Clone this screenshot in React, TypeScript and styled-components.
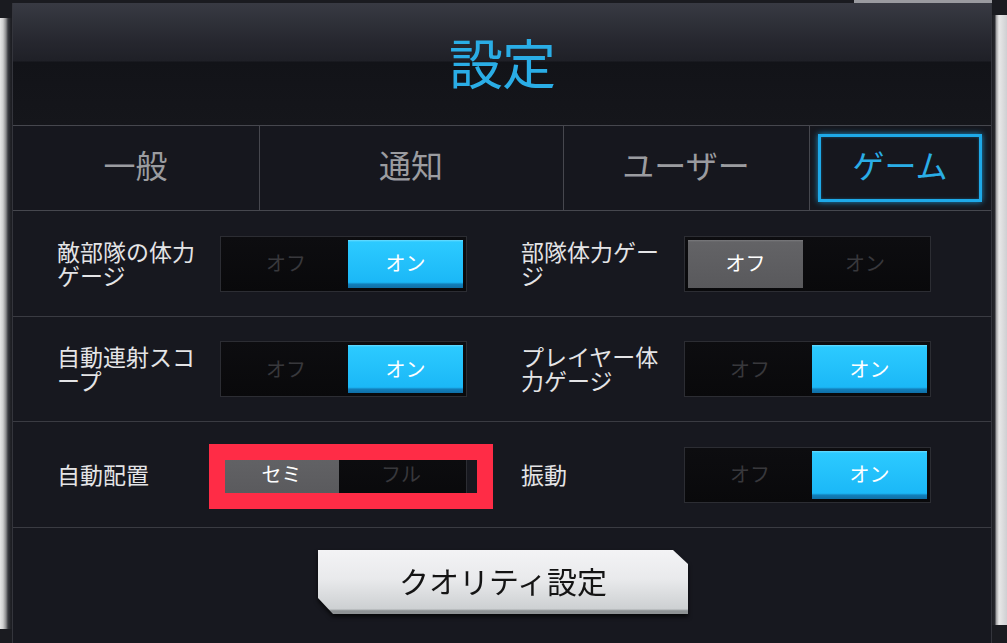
import React from "react";
import styled, { createGlobalStyle } from "styled-components";

const Global = createGlobalStyle`
  html, body { margin: 0; padding: 0; background: #16171c; }
  body { font-family: "Noto Sans CJK JP", "Noto Sans", sans-serif; }
  * { box-sizing: border-box; }
`;

const Frame = styled.div`
  width: 1007px;
  height: 643px;
  display: flex;
  overflow: hidden;
  background:
    linear-gradient(to right, transparent 854px, #9a9ba0 854px, #9a9ba0 992px, transparent 992px) top left / 100% 3px no-repeat,
    #1a1b20;
`;

const LeftBevel = styled.div`
  width: 12px;
  flex-shrink: 0;
  margin: 18px 0 14px;
  background: linear-gradient(to right, #e6e6e6 0, #cfcfcf 3px, #8a8a8c 6px, #3a3b40 8px, #1d1e23 11px);
`;

const RightBevel = styled.div`
  width: 15px;
  flex-shrink: 0;
  margin: 15px 0 18px;
  background: linear-gradient(to right, #1d1e23 0, #2a2b30 3px, #9c9c9e 4px, #e8e8e8 7px, #cfcfd2 15px);
`;

const Panel = styled.div`
  width: 980px;
  flex-shrink: 0;
  margin-top: 3px;
  display: flex;
  flex-direction: column;
  background: #17181f;
  border-left: 1px solid #34353c;
  border-right: 1px solid #34353c;
`;

const Header = styled.div`
  height: 123px;
  flex-shrink: 0;
  display: flex;
  align-items: center;
  justify-content: center;
  padding-bottom: 5px;
  border-bottom: 1px solid #46474e;
  background: linear-gradient(to bottom, #383a43 0, #272830 36px, #1f2027 58px, #121318 59px, #15161b 100%);
`;

const Title = styled.h1`
  margin: 0;
  font-size: 54px;
  font-weight: 400;
  color: #2aade6;
  letter-spacing: -1px;
`;

const Tabs = styled.div`
  height: 85px;
  flex-shrink: 0;
  display: grid;
  grid-template-columns: 246px 304px 246px 1fr;
  border-bottom: 1px solid #46474e;
  background: #16171e;
`;

const Tab = styled.div<{ $first?: boolean }>`
  display: flex;
  align-items: center;
  justify-content: center;
  border-left: ${(p) => (p.$first ? "none" : "1px solid #46474e")};
  padding: 8px 9px 8px 8px;
`;

const TabLabel = styled.span`
  font-size: 32px;
  color: #9b9ca0;
  margin-top: -8px;
`;

const SelectedBox = styled.div`
  width: 100%;
  height: 100%;
  display: flex;
  align-items: center;
  justify-content: center;
  padding-bottom: 8px;
  border: 3px solid #1ea9e8;
  box-shadow: 0 0 6px rgba(30, 169, 232, 0.8), inset 0 0 3px rgba(30, 169, 232, 0.4);
  font-size: 32px;
  color: #2aade6;
`;

const Row = styled.div<{ $h: number }>`
  height: ${(p) => p.$h}px;
  flex-shrink: 0;
  display: grid;
  grid-template-columns: 464px 1fr;
  border-bottom: 1px solid #3a3b42;
`;

const Cell = styled.div`
  display: flex;
  align-items: center;
  padding-left: 44px;
`;

const Label = styled.div`
  width: 163px;
  flex-shrink: 0;
  display: flex;
  flex-direction: column;
  margin-top: -2px;
`;

const LabelLine = styled.div`
  height: 24px;
  font-size: 23px;
  line-height: 24px;
  color: #e4e4e6;
  white-space: nowrap;
`;

const ToggleWrap = styled.div`
  position: relative;
`;

const Toggle = styled.div`
  width: 247px;
  height: 56px;
  display: flex;
  padding: 3px;
  border: 1px solid #2c2d33;
  background: linear-gradient(to bottom, #0d0d10, #09090b);
`;

const Half = styled.div<{ $on?: boolean; $kind?: "blue" | "gray" }>`
  flex: ${(p) => (p.$on ? "0 0 115px" : "1 1 0")};
  display: flex;
  align-items: center;
  justify-content: center;
  font-size: 20px;
  padding-bottom: 2px;
  color: ${(p) => (p.$on ? "#ffffff" : "#38383c")};
  background: ${(p) =>
    !p.$on
      ? "transparent"
      : p.$kind === "gray"
      ? "linear-gradient(to bottom, #7a7a7d 0, #636366 2px, #59595c 100%)"
      : "linear-gradient(to bottom, #6adcff 0, #2ccaff 2px, #1bb8f7 88%, #127fba 92%, #0f6fa6 100%)"};
`;

const Highlight = styled.div`
  position: absolute;
  left: -11px;
  top: -3px;
  width: 284px;
  height: 65px;
  border: 16px solid #ff2c46;
  pointer-events: none;
`;

const Bottom = styled.div`
  flex: 1;
  display: flex;
  justify-content: center;
  padding-top: 22px;
  padding-left: 2px;
`;

const ButtonShadow = styled.div`
  filter: drop-shadow(0 3px 2px rgba(0, 0, 0, 0.7));
  height: 64px;
`;

const QualityButton = styled.button`
  width: 370px;
  height: 64px;
  border: none;
  padding: 0 0 4px;
  font-family: "Noto Sans CJK JP", "Noto Sans", sans-serif;
  font-size: 30px;
  color: #141414;
  cursor: pointer;
  background: linear-gradient(to bottom, #f3f3f5 0, #e9eaec 45%, #cdd0d2 92%, #8f9395 95%, #8f9395 100%);
  clip-path: polygon(0 0, calc(100% - 15px) 0, 100% 14px, 100% 100%, 15px 100%, 0 calc(100% - 16px));
`;

type Side = { label: string[]; off: string; on: string; value: "off" | "on"; highlight?: boolean };

const rows: { h: number; cells: [Side, Side] }[] = [
  {
    h: 106,
    cells: [
      { label: ["敵部隊の体力", "ゲージ"], off: "オフ", on: "オン", value: "on" },
      { label: ["部隊体力ゲー", "ジ"], off: "オフ", on: "オン", value: "off" },
    ],
  },
  {
    h: 105,
    cells: [
      { label: ["自動連射スコ", "ープ"], off: "オフ", on: "オン", value: "on" },
      { label: ["プレイヤー体", "力ゲージ"], off: "オフ", on: "オン", value: "on" },
    ],
  },
  {
    h: 106,
    cells: [
      { label: ["自動配置"], off: "セミ", on: "フル", value: "off", highlight: true },
      { label: ["振動"], off: "オフ", on: "オン", value: "on" },
    ],
  },
];

function SettingCell({ s }: { s: Side }) {
  return (
    <Cell>
      <Label>
        {s.label.map((l, i) => (
          <LabelLine key={i}>{l}</LabelLine>
        ))}
      </Label>
      <ToggleWrap>
        <Toggle>
          <Half $on={s.value === "off"} $kind="gray">{s.off}</Half>
          <Half $on={s.value === "on"} $kind="blue">{s.on}</Half>
        </Toggle>
        {s.highlight && <Highlight />}
      </ToggleWrap>
    </Cell>
  );
}

export default function App() {
  return (
    <>
      <Global />
      <Frame>
        <LeftBevel />
        <Panel>
          <Header>
            <Title>設定</Title>
          </Header>
          <Tabs>
            <Tab $first>
              <TabLabel>一般</TabLabel>
            </Tab>
            <Tab>
              <TabLabel>通知</TabLabel>
            </Tab>
            <Tab>
              <TabLabel>ユーザー</TabLabel>
            </Tab>
            <Tab>
              <SelectedBox>ゲーム</SelectedBox>
            </Tab>
          </Tabs>
          {rows.map((r, i) => (
            <Row key={i} $h={r.h}>
              <SettingCell s={r.cells[0]} />
              <SettingCell s={r.cells[1]} />
            </Row>
          ))}
          <Bottom>
            <ButtonShadow>
              <QualityButton>クオリティ設定</QualityButton>
            </ButtonShadow>
          </Bottom>
        </Panel>
        <RightBevel />
      </Frame>
    </>
  );
}
